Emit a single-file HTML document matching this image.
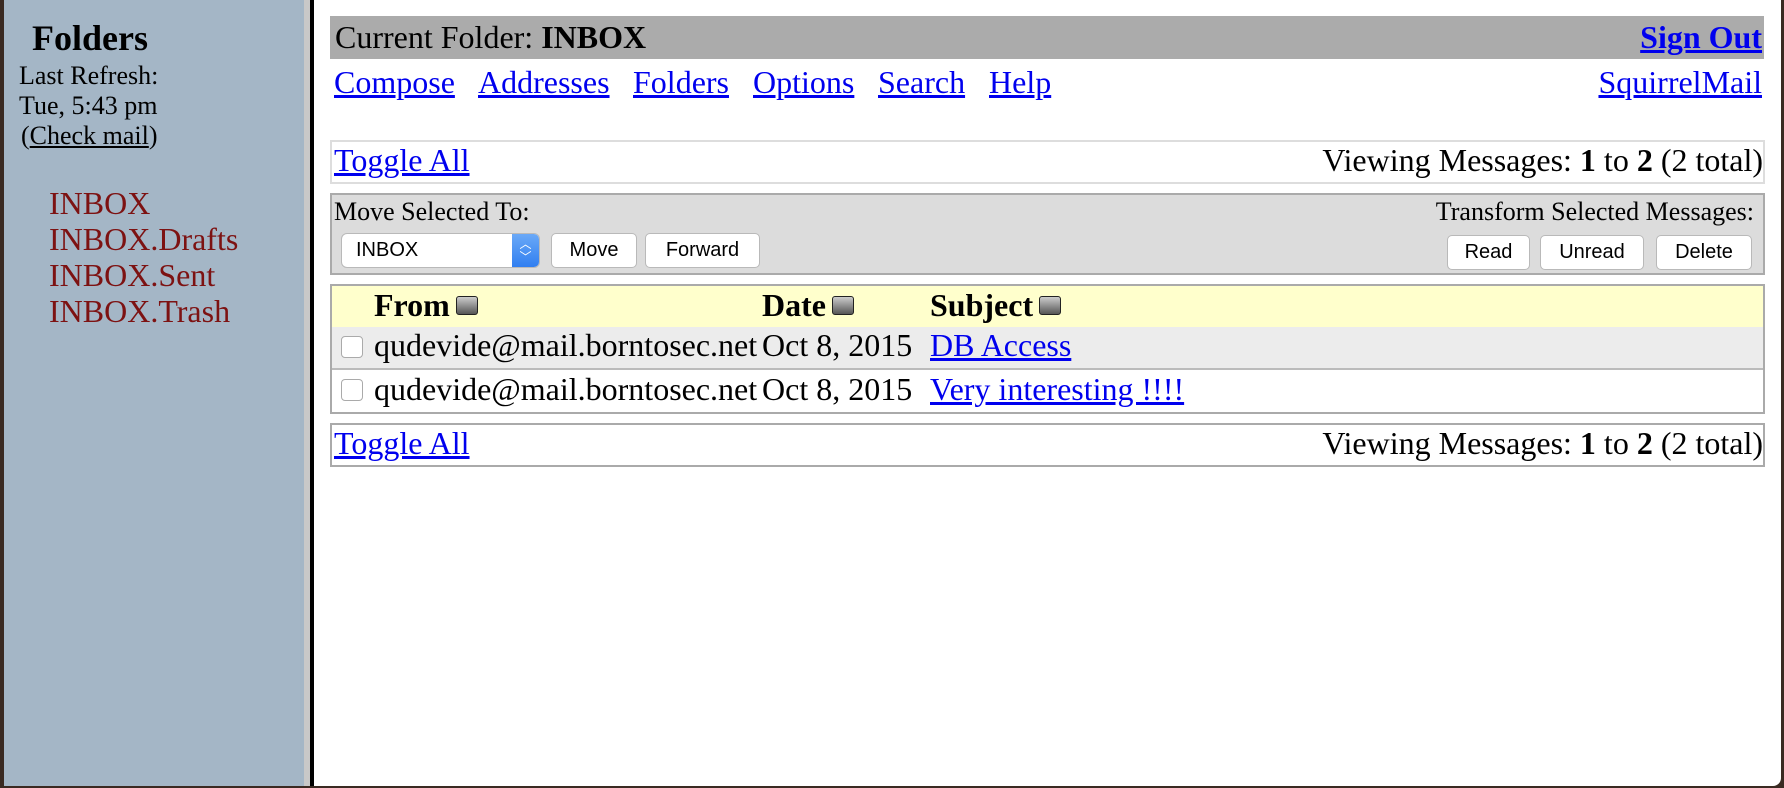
<!DOCTYPE html>
<html><head><style>
body{margin:0;width:1784px;height:788px;overflow:hidden;background:#3a2a22;font-family:"Liberation Serif",serif;position:relative}
.a{position:absolute;white-space:nowrap}
a{color:#0000ee;text-decoration:underline}
.f{color:#7d1212;font-size:32px}
.m{font-size:32px}
.btn{position:absolute;background:#fff;border:1px solid #b9b9b9;border-radius:5px;font-family:"Liberation Sans",sans-serif;font-size:20px;text-align:center;box-sizing:border-box;line-height:33px;height:35px}
.cb{position:absolute;width:20px;height:20px;border:1px solid #aaa;border-radius:4px;background:#fff}
.sq{display:inline-block;width:20px;height:17px;background:linear-gradient(#ccc,#555);border:1px solid #222;border-radius:3px;vertical-align:1px;margin-left:6px}
</style></head><body>
<div class="a" style="left:4px;top:0;width:300px;height:786px;background:#a4b6c6"></div>
<div class="a" style="left:304px;top:0;width:6px;height:786px;background:#c8c8c8"></div>
<div class="a" style="left:310px;top:0;width:4px;height:786px;background:#000"></div>
<div class="a" style="left:314px;top:0;width:1467px;height:786px;background:#fff;border-bottom-right-radius:8px"></div>

<div class="a" style="left:32px;top:17px;font-size:36px;font-weight:bold">Folders</div>
<div class="a" style="left:19px;top:61px;font-size:26px;line-height:30px">Last Refresh:<br>Tue, 5:43 pm<br><span style="margin-left:2px">(<span style="text-decoration:underline">Check mail</span>)</span></div>
<div class="a f" style="left:49px;top:185px">INBOX</div>
<div class="a f" style="left:49px;top:221px">INBOX.Drafts</div>
<div class="a f" style="left:49px;top:257px">INBOX.Sent</div>
<div class="a f" style="left:49px;top:293px">INBOX.Trash</div>

<div class="a" style="left:330px;top:16px;width:1434px;height:43px;background:#ababab"></div>
<div class="a m" style="left:335px;top:19px">Current Folder: <b>INBOX</b></div>
<div class="a m" style="right:22px;top:19px;font-weight:bold"><a>Sign Out</a></div>
<div class="a m" style="left:334px;top:64px"><a>Compose</a></div>
<div class="a m" style="left:478px;top:64px"><a>Addresses</a></div>
<div class="a m" style="left:633px;top:64px"><a>Folders</a></div>
<div class="a m" style="left:753px;top:64px"><a>Options</a></div>
<div class="a m" style="left:878px;top:64px"><a>Search</a></div>
<div class="a m" style="left:989px;top:64px"><a>Help</a></div>
<div class="a m" style="right:22px;top:64px"><a>SquirrelMail</a></div>

<div class="a" style="left:330px;top:140px;width:1431px;height:40px;border:2px solid #ddd"></div>
<div class="a m" style="left:334px;top:142px"><a>Toggle All</a></div>
<div class="a m" style="right:21px;top:142px">Viewing Messages: <b>1</b> to <b>2</b> (2 total)</div>

<div class="a" style="left:330px;top:193px;width:1431px;height:78px;border:2px solid #aaa;background:#dcdcdc"></div>
<div class="a" style="left:334px;top:197px;font-size:26px">Move Selected To:</div>
<div class="a" style="right:30px;top:197px;font-size:26px">Transform Selected Messages:</div>
<div class="btn" style="left:341px;top:233px;width:199px;text-align:left;padding-left:14px;overflow:hidden;border-radius:6px">INBOX<div style="position:absolute;right:0;top:0;width:27px;height:35px;background:linear-gradient(#6aa9f7,#2d7cf0);color:#fff;font-size:12px;line-height:13px;text-align:center;padding-top:4px;box-sizing:border-box">︿<br>﹀</div></div>
<div class="btn" style="left:551px;top:233px;width:86px">Move</div>
<div class="btn" style="left:645px;top:233px;width:115px">Forward</div>
<div class="btn" style="left:1447px;top:235px;width:83px">Read</div>
<div class="btn" style="left:1540px;top:235px;width:104px">Unread</div>
<div class="btn" style="left:1656px;top:235px;width:96px">Delete</div>

<div class="a" style="left:330px;top:284px;width:1431px;height:126px;border:2px solid #aaa"></div>
<div class="a" style="left:332px;top:286px;width:1431px;height:41px;background:#ffffcc"></div>
<div class="a" style="left:332px;top:327px;width:1431px;height:41px;background:#ececec"></div>
<div class="a" style="left:332px;top:368px;width:1431px;height:2px;background:#bbb"></div>
<div class="a m" style="left:374px;top:287px;font-weight:bold">From<span class="sq"></span></div>
<div class="a m" style="left:762px;top:287px;font-weight:bold">Date<span class="sq"></span></div>
<div class="a m" style="left:930px;top:287px;font-weight:bold">Subject<span class="sq"></span></div>
<div class="cb" style="left:341px;top:336px"></div>
<div class="a m" style="left:374px;top:327px">qudevide@mail.borntosec.net</div>
<div class="a m" style="left:762px;top:327px">Oct 8, 2015</div>
<div class="a m" style="left:930px;top:327px"><a>DB Access</a></div>
<div class="cb" style="left:341px;top:379px"></div>
<div class="a m" style="left:374px;top:371px">qudevide@mail.borntosec.net</div>
<div class="a m" style="left:762px;top:371px">Oct 8, 2015</div>
<div class="a m" style="left:930px;top:371px"><a>Very interesting !!!!</a></div>

<div class="a" style="left:330px;top:423px;width:1431px;height:40px;border:2px solid #aaa"></div>
<div class="a m" style="left:334px;top:425px"><a>Toggle All</a></div>
<div class="a m" style="right:21px;top:425px">Viewing Messages: <b>1</b> to <b>2</b> (2 total)</div>
</body></html>
